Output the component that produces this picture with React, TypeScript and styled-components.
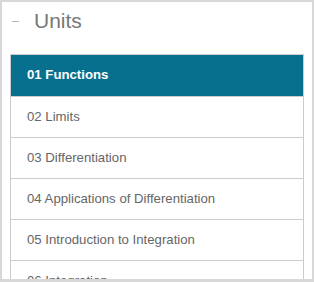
import React from "react";
import styled, { createGlobalStyle } from "styled-components";

const GlobalStyle = createGlobalStyle`
    html, body {
        margin: 0;
        padding: 0;
        background: #ffffff;
    }
    body {
        font-family: "Liberation Sans", Arial, sans-serif;
    }
`;

const Panel = styled.section`
    box-sizing: border-box;
    width: 314px;
    height: 282px;
    border: 2px solid #d8d8d8;
    border-bottom-width: 3px;
    padding: 0 8px;
    overflow: hidden;
    background: #fff;
`;

const Header = styled.header`
    display: flex;
    align-items: center;
    height: 52px;
    padding-bottom: 14px;
    box-sizing: border-box;
`;

const Collapse = styled.span`
    display: block;
    width: 7px;
    height: 1px;
    background: #b5b5b5;
    margin: 0 15px 0 2px;
`;

const Title = styled.h2`
    margin: 0;
    font-size: 21px;
    font-weight: 400;
    line-height: 24px;
    color: #777777;
`;

const UnitList = styled.ul`
    list-style: none;
    margin: 0;
    padding: 0;
    border: 1px solid #cccccc;
    border-bottom: none;
`;

const UnitItem = styled.li<{ $active?: boolean }>`
    display: flex;
    align-items: center;
    box-sizing: border-box;
    height: ${(p) => (p.$active ? "42px" : "41px")};
    padding: 0 0 2px 16px;
    border-bottom: 1px solid #cccccc;
    font-size: 13.2px;
    font-weight: ${(p) => (p.$active ? 700 : 400)};
    color: ${(p) => (p.$active ? "#ffffff" : "#666666")};
    background: ${(p) => (p.$active ? "#07708f" : "#ffffff")};
`;

const units = [
    "01 Functions",
    "02 Limits",
    "03 Differentiation",
    "04 Applications of Differentiation",
    "05 Introduction to Integration",
    "06 Integration",
];

const App = () => {
    return (
        <>
            <GlobalStyle />
            <Panel>
                <Header>
                    <Collapse />
                    <Title>Units</Title>
                </Header>
                <UnitList>
                    {units.map((name, i) => (
                        <UnitItem key={name} $active={i === 0}>
                            {name}
                        </UnitItem>
                    ))}
                </UnitList>
            </Panel>
        </>
    );
};

export default App;
